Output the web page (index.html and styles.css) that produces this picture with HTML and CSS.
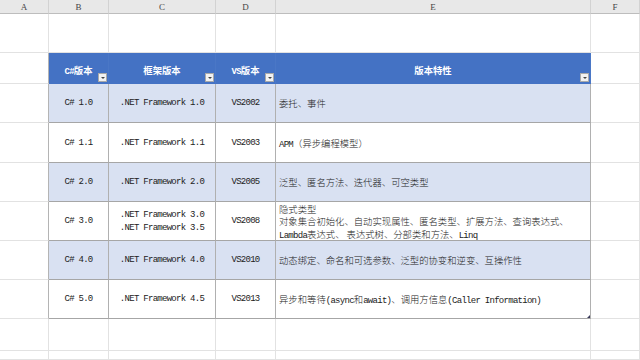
FILE: index.html
```html
<!DOCTYPE html>
<html lang="zh">
<head>
<meta charset="utf-8">
<title>C#版本</title>
<link rel="stylesheet" href="styles.css">
</head>
<body>
<div class="sheet">
  <div class="colhead">A</div>
  <div class="colhead">B</div>
  <div class="colhead">C</div>
  <div class="colhead">D</div>
  <div class="colhead">E</div>
  <div class="colhead">F</div>

  <div class="cell"></div><div class="cell"></div><div class="cell"></div><div class="cell"></div><div class="cell"></div><div class="cell"></div>

  <div class="cell edge"></div>
  <div class="th"><span class="txt">C#<span class="zh">版本</span></span><span class="filter"></span></div>
  <div class="th"><span class="txt"><span class="zh">框架版本</span></span><span class="filter"></span></div>
  <div class="th"><span class="txt">VS<span class="zh">版本</span></span><span class="filter"></span></div>
  <div class="th"><span class="txt"><span class="zh">版本特性</span></span><span class="filter"></span></div>
  <div class="cell"></div>

  <div class="cell edge"></div>
  <div class="td c band">C# 1.0</div>
  <div class="td c band">.NET Framework 1.0</div>
  <div class="td c band">VS2002</div>
  <div class="td l band"><span class="txt"><span class="zh">委托、事件</span></span></div>
  <div class="cell"></div>

  <div class="cell edge"></div>
  <div class="td c">C# 1.1</div>
  <div class="td c">.NET Framework 1.1</div>
  <div class="td c">VS2003</div>
  <div class="td l"><span class="txt">APM<span class="zh">（异步编程模型）</span></span></div>
  <div class="cell"></div>

  <div class="cell edge"></div>
  <div class="td c band">C# 2.0</div>
  <div class="td c band">.NET Framework 2.0</div>
  <div class="td c band">VS2005</div>
  <div class="td l band"><span class="txt"><span class="zh">泛型、匿名方法、迭代器、可空类型</span></span></div>
  <div class="cell"></div>

  <div class="cell edge"></div>
  <div class="td c">C# 3.0</div>
  <div class="td c"><div class="lines"><div class="line">.NET Framework 3.0</div><div class="line">.NET Framework 3.5</div></div></div>
  <div class="td c">VS2008</div>
  <div class="td l"><div class="lines"><div class="line"><span class="zh">隐式类型</span></div><div class="line"><span class="zh">对象集合初始化、自动实现属性、匿名类型、扩展方法、查询表达式、</span></div><div class="line">Lambda<span class="zh">表达式、 表达式树、分部类和方法、</span>Linq</div></div></div>
  <div class="cell"></div>

  <div class="cell edge"></div>
  <div class="td c band">C# 4.0</div>
  <div class="td c band">.NET Framework 4.0</div>
  <div class="td c band">VS2010</div>
  <div class="td l band"><span class="txt"><span class="zh">动态绑定、命名和可选参数、泛型的协变和逆变、互操作性</span></span></div>
  <div class="cell"></div>

  <div class="cell edge"></div>
  <div class="td c">C# 5.0</div>
  <div class="td c">.NET Framework 4.5</div>
  <div class="td c">VS2013</div>
  <div class="td l"><span class="txt"><span class="zh">异步和等待</span>(async<span class="zh">和</span>await)<span class="zh">、调用方信息</span>(Caller Information)</span><span class="handle"></span></div>
  <div class="cell"></div>

  <div class="cell"></div><div class="cell"></div><div class="cell"></div><div class="cell"></div><div class="cell"></div><div class="cell"></div>
  <div class="cell"></div><div class="cell"></div><div class="cell"></div><div class="cell"></div><div class="cell"></div><div class="cell"></div>
</div>
</body>
</html>
```
FILE: styles.css
```css
html, body {
  margin: 0;
  padding: 0;
  background: #ffffff;
  overflow: hidden;
}

.sheet {
  display: grid;
  grid-template-columns: 49px 60px 107px 60px 315px 49px;
  grid-template-rows: 14px 39px 31px 39px 40px 39px 39px 39px 39px 32px 9px;
  width: 640px;
  height: 360px;
  overflow: hidden;
  font-family: "Liberation Mono", monospace;
  font-size: 9px;
  letter-spacing: -0.72px;
  color: #222222;
}

.sheet > div {
  box-sizing: border-box;
}

.colhead {
  background: #e8e8e8;
  border-right: 1px solid #d2d2d2;
  border-bottom: 1px solid #bdbdbd;
  font-family: "Liberation Serif", serif;
  font-size: 9px;
  letter-spacing: 0;
  color: #444444;
  display: flex;
  align-items: center;
  justify-content: center;
  padding-top: 1px;
}

.cell {
  border-right: 1px solid #e2e2e2;
  border-bottom: 1px solid #e2e2e2;
  background: #ffffff;
}

.cell.edge {
  border-right-color: #b4b4b4;
}

.th {
  position: relative;
  background: #4472c4;
  color: #ffffff;
  font-weight: bold;
  display: flex;
  align-items: center;
  justify-content: center;
  padding-top: 4px;
  border-right: 1px solid #4a77c6;
  border-bottom: 1px solid #4472c4;
}

.txt {
  white-space: nowrap;
}

.filter {
  position: absolute;
  right: 1px;
  bottom: 1px;
  width: 9px;
  height: 9px;
  box-sizing: border-box;
  background: #f2f2f2;
  border: 1px solid #a9a9a9;
}

.filter::after {
  content: "";
  position: absolute;
  left: 2px;
  top: 3px;
  border-left: 2px solid transparent;
  border-right: 2px solid transparent;
  border-top: 2px solid #444444;
}

.td {
  position: relative;
  display: flex;
  align-items: center;
  border-right: 1px solid #b0b0b0;
  border-bottom: 1px solid #a6a6a6;
  background: #ffffff;
  white-space: nowrap;
}

.td.band {
  background: #d9e1f2;
}

.td.c {
  justify-content: center;
}

.td.l {
  justify-content: flex-start;
  padding-left: 3px;
}

.lines {
  display: flex;
  flex-direction: column;
  padding-top: 1px;
}

.line {
  height: 12.5px;
  line-height: 12.5px;
  overflow: visible;
}

.line .zh {
  line-height: 12.5px;
}

.zh {
  font-family: "Noto Sans CJK SC", sans-serif;
  font-size: 9.36px;
  letter-spacing: 0;
  font-weight: inherit;
}

.td .zh {
  font-weight: 300;
}

.handle {
  position: absolute;
  right: 0;
  bottom: 0;
  width: 0;
  height: 0;
  border-left: 3px solid transparent;
  border-bottom: 3px solid #3a3a5a;
}
```
